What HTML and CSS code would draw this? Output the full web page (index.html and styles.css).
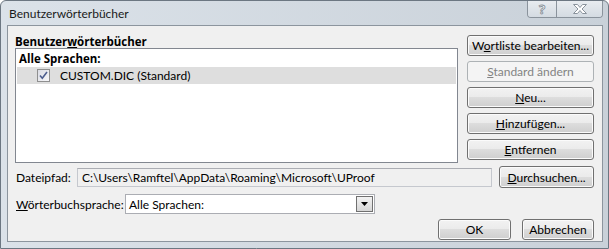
FILE: index.html
```html
<!DOCTYPE html>
<html lang="de">
<head>
    <meta charset="UTF-8">
    <title>Benutzerwörterbücher</title>
    <link rel="stylesheet" href="styles.css">
</head>
<body>

<div class="window">
    <div class="titlebar">
        <span class="title">Benutzerwörterbücher</span>
        <div class="caption-buttons">
            <div class="cap-btn help">?</div>
            <div class="cap-btn close">
                <svg width="16" height="12" viewBox="0 0 16 12">
                    <path d="M1.5 1.5h4l2.5 3 2.5-3h4l-4.5 4.5 4.5 4.5h-4l-2.5-3-2.5 3h-4l4.5-4.5z" fill="#fff" stroke="#8a939c" stroke-width="1"/>
                </svg>
            </div>
        </div>
    </div>

    <div class="client">
        <div class="top">
            <div class="dict-panel">
                <div class="group-label">Benutzer<u>w</u>örterbücher</div>
                <div class="dict-list">
                    <div class="lang-head">Alle Sprachen:</div>
                    <div class="dict-row">
                        <span class="checkbox">
                            <svg width="9" height="9" viewBox="0 0 9 9">
                                <path d="M1 4.5l2.3 2.7L8 1" fill="none" stroke="#4c5d8e" stroke-width="1.6"/>
                            </svg>
                        </span>
                        <span>CUSTOM.DIC (Standard)</span>
                    </div>
                </div>
            </div>
            <div class="side-buttons">
                <button class="btn">W<u>o</u>rtliste bearbeiten...</button>
                <button class="btn" disabled><u>S</u>tandard ändern</button>
                <button class="btn"><u>N</u>eu...</button>
                <button class="btn"><u>H</u>inzufügen...</button>
                <button class="btn"><u>E</u>ntfernen</button>
            </div>
        </div>

        <div class="field-row path-row">
            <span class="field-label">Dateipfad:</span>
            <div class="path-box">C:\Users\Ramftel\AppData\Roaming\Microsoft\UProof</div>
            <button class="btn browse"><u>D</u>urchsuchen...</button>
        </div>

        <div class="field-row lang-row">
            <span class="field-label"><u>W</u>örterbuchsprache:</span>
            <div class="combo">
                <span class="combo-text">Alle Sprachen:</span>
                <span class="combo-arrow">
                    <svg width="7" height="4" viewBox="0 0 7 4"><path d="M0 0h7L3.5 4z" fill="#000"/></svg>
                </span>
            </div>
        </div>

        <div class="dialog-buttons">
            <button class="btn ok">OK</button>
            <button class="btn cancel">Abbrechen</button>
        </div>
    </div>
</div>

</body>
</html>
```

FILE: styles.css
```css
body {
    margin: 0;
    padding: 0;
    font-family: Lato, "Liberation Sans", sans-serif;
    font-size: 12px;
    color: #000;
    background: #fff;
}

.window {
    width: 609px;
    height: 249px;
    box-sizing: border-box;
    border: 1px solid #6c7782;
    border-radius: 6px 6px 0 0;
    background: linear-gradient(to right, #dbe2e9, #c9d1d9);
    padding: 0 5px 6px 6px;
    display: flex;
    flex-direction: column;
}

.titlebar {
    height: 24px;
    display: flex;
    justify-content: space-between;
    align-items: flex-start;
}

.title {
    margin: 5px 0 0 2px;
    color: #1a1a1a;
}

.caption-buttons {
    display: flex;
    border: 1px solid #8a939c;
    border-top: none;
    border-radius: 0 0 4px 4px;
    overflow: hidden;
}

.cap-btn {
    height: 16px;
    display: flex;
    align-items: center;
    justify-content: center;
    background: linear-gradient(#e8ecf0, #d4dbe2);
}

.help {
    width: 28px;
    border-right: 1px solid #8a939c;
    font-family: "Open Sans", sans-serif;
    font-size: 13px;
    font-weight: bold;
    color: #fff;
    -webkit-text-stroke: 0.8px #838c95;
}

.close {
    width: 45px;
}

.client {
    flex: 1;
    background: #f0f0f0;
    border: 1px solid #8c959e;
    padding: 9px 8px 0 7px;
    display: flex;
    flex-direction: column;
}

.top {
    display: flex;
    gap: 9px;
}

.dict-panel {
    flex: 1;
    display: flex;
    flex-direction: column;
}

.group-label,
.lang-head {
    font-family: "Open Sans", sans-serif;
    font-size: 11.5px;
    font-weight: bold;
}

.group-label {
    height: 14px;
    line-height: 14px;
    margin-bottom: -1px;
}

.dict-list {
    height: 111px;
    background: #fff;
    border: 1px solid #828790;
    padding: 2px 1px 0 1px;
}

.lang-head {
    height: 16px;
    line-height: 16px;
    padding-left: 2px;
}

.dict-row {
    height: 17px;
    background: #dedede;
    display: flex;
    align-items: center;
    gap: 10px;
    padding-left: 20px;
}

.checkbox {
    width: 11px;
    height: 11px;
    border: 1px solid #8f8f8f;
    background: linear-gradient(135deg, #dadce4, #f6f6f8);
    display: flex;
    align-items: center;
    justify-content: center;
}

.side-buttons {
    width: 127px;
    display: flex;
    flex-direction: column;
    gap: 5px;
}

.btn {
    font-family: Lato, "Liberation Sans", sans-serif;
    font-size: 12px;
    color: #000;
    height: 21px;
    padding: 0;
    border: 1px solid #707070;
    border-radius: 3px;
    background: linear-gradient(#f2f2f2 0%, #ebebeb 49%, #dddddd 50%, #cfcfcf 100%);
    box-shadow: inset 0 0 0 1px #fbfbfb;
}

.btn:disabled {
    color: #838383;
    border-color: #adb2b5;
    background: #f4f4f4;
    box-shadow: none;
}

.field-row {
    display: flex;
    align-items: center;
}

.field-label {
    padding-left: 1px;
}

.path-row {
    margin-top: 3px;
}

.path-row .field-label {
    width: 61px;
}

.path-box {
    width: 410px;
    height: 17px;
    line-height: 17px;
    border: 1px solid #c5c8ce;
    border-top-color: #abadb3;
    background: #f0f0f0;
    padding-left: 4px;
    margin-top: 1px;
}

.browse {
    width: 95px;
    height: 22px;
    margin-left: 7px;
}

.lang-row {
    margin-top: 6px;
}

.lang-row .field-label {
    width: 109px;
}

.combo {
    width: 248px;
    height: 18px;
    border: 1px solid #abadb3;
    background: #fff;
    display: flex;
    align-items: center;
    justify-content: space-between;
}

.combo-text {
    padding-left: 3px;
}

.combo-arrow {
    width: 15px;
    height: 14px;
    margin-right: 1px;
    border: 1px solid #707070;
    background: linear-gradient(#f2f2f2, #d6d6d6);
    display: flex;
    align-items: center;
    justify-content: center;
}

.dialog-buttons {
    display: flex;
    justify-content: flex-end;
    gap: 11px;
    margin-top: 5px;
}

.ok {
    width: 73px;
}

.cancel {
    width: 72px;
}
```
